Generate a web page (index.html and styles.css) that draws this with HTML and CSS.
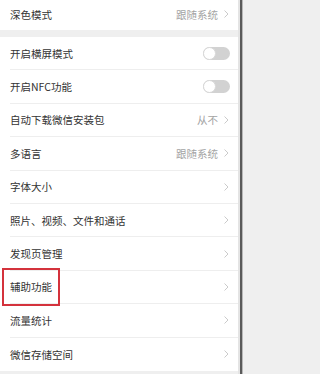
FILE: index.html
```html
<!DOCTYPE html>
<html lang="zh-CN">
<head>
<meta charset="utf-8">
<title>设置</title>
<link rel="stylesheet" href="styles.css">
</head>
<body>
<div class="screen">
  <main class="list">
    <section class="group group-top">
      <div class="row row-first">
        <span class="label">深色模式</span>
        <span class="value">跟随系统</span>
        <svg class="chev" viewBox="0 0 5 8"><polyline points="0.5,0.5 4,4 0.5,7.5"/></svg>
      </div>
    </section>
    <section class="group">
      <div class="row">
        <span class="label">开启横屏模式</span>
        <span class="switch"><span class="knob"></span></span>
      </div>
      <div class="row">
        <span class="label">开启NFC功能</span>
        <span class="switch"><span class="knob"></span></span>
      </div>
      <div class="row">
        <span class="label">自动下载微信安装包</span>
        <span class="value">从不</span>
        <svg class="chev" viewBox="0 0 5 8"><polyline points="0.5,0.5 4,4 0.5,7.5"/></svg>
      </div>
      <div class="row">
        <span class="label">多语言</span>
        <span class="value">跟随系统</span>
        <svg class="chev" viewBox="0 0 5 8"><polyline points="0.5,0.5 4,4 0.5,7.5"/></svg>
      </div>
      <div class="row">
        <span class="label">字体大小</span>
        <svg class="chev" viewBox="0 0 5 8"><polyline points="0.5,0.5 4,4 0.5,7.5"/></svg>
      </div>
      <div class="row">
        <span class="label">照片、视频、文件和通话</span>
        <svg class="chev" viewBox="0 0 5 8"><polyline points="0.5,0.5 4,4 0.5,7.5"/></svg>
      </div>
      <div class="row">
        <span class="label">发现页管理</span>
        <svg class="chev" viewBox="0 0 5 8"><polyline points="0.5,0.5 4,4 0.5,7.5"/></svg>
      </div>
      <div class="row row-marked">
        <span class="label">辅助功能</span>
        <svg class="chev" viewBox="0 0 5 8"><polyline points="0.5,0.5 4,4 0.5,7.5"/></svg>
        <span class="mark"></span>
      </div>
      <div class="row">
        <span class="label">流量统计</span>
        <svg class="chev" viewBox="0 0 5 8"><polyline points="0.5,0.5 4,4 0.5,7.5"/></svg>
      </div>
      <div class="row row-last">
        <span class="label">微信存储空间</span>
        <svg class="chev" viewBox="0 0 5 8"><polyline points="0.5,0.5 4,4 0.5,7.5"/></svg>
      </div>
    </section>
  </main>
  <div class="edge"></div>
</div>
</body>
</html>
```
FILE: styles.css
```css
html, body {
  margin: 0;
  padding: 0;
  background: #efefef;
}
body {
  width: 243px;
  height: 374px;
  overflow: hidden;
  font-family: "Noto Sans CJK SC", "Noto Sans", sans-serif;
}
.screen {
  display: flex;
  width: 243px;
  height: 374px;
}
.list {
  flex: 1;
  display: flex;
  flex-direction: column;
  gap: 7px;
  background: #efefef;
}
.group {
  background: #ffffff;
  padding-left: 10px;
}
.row {
  position: relative;
  display: flex;
  align-items: center;
  height: 33.4px;
  box-sizing: border-box;
  border-bottom: 1px solid #eeeeee;
  padding-right: 9px;
}
.row-first {
  height: 30px;
  padding-bottom: 2px;
  border-bottom: none;
}
.row-last {
  border-bottom: none;
}
.label {
  flex: 1;
  font-size: 10.5px;
  color: #333333;
  white-space: nowrap;
}
.value {
  font-size: 10.5px;
  color: #a3a3a3;
  margin-right: 6px;
}
.chev {
  width: 5px;
  height: 8px;
  fill: none;
  stroke: #c4c4c4;
  stroke-width: 0.9;
}
.switch {
  position: relative;
  width: 27px;
  height: 13px;
  border-radius: 7px;
  background: #d2d2d2;
  margin-right: -1px;
}
.knob {
  position: absolute;
  left: 0;
  top: 0;
  width: 13px;
  height: 13px;
  box-sizing: border-box;
  border-radius: 50%;
  background: #ffffff;
  border: 1px solid #d8d8d8;
}
.mark {
  position: absolute;
  left: -8px;
  top: -3px;
  width: 58px;
  height: 38px;
  box-sizing: border-box;
  border: 2px solid #d4323c;
}
.edge {
  width: 5px;
  flex: none;
  background: linear-gradient(to right, #e4e4e4 0, #e4e4e4 2px, #5a5a5a 2px, #5a5a5a 4px, #b8b8b8 4px);
}
```
